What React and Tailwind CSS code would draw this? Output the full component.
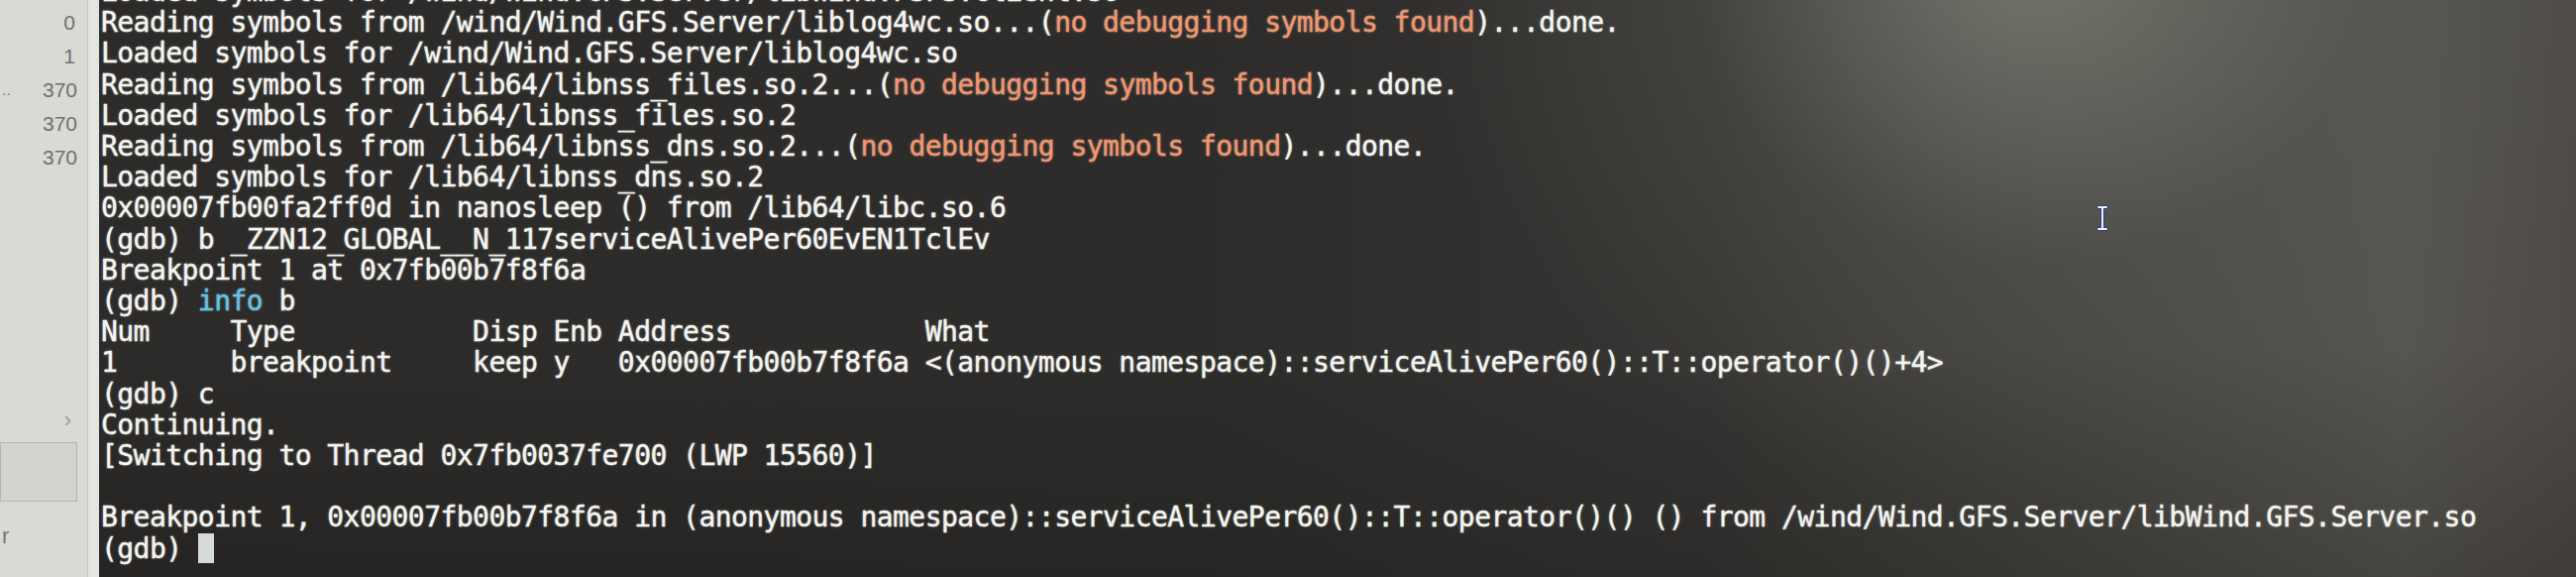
import React from "react";

const O = ({ children }) => <span className="text-[#f2966e] [-webkit-text-stroke:0.4px_#f2966e]">{children}</span>;

export default function App() {
  return (
    <div className="w-[2600px] h-[582px] overflow-hidden flex bg-[#2a2927]">
      {/* left sidebar (another window) */}
      <div className="w-[88px] h-full shrink-0 bg-[#d9dad4] flex flex-col font-['Liberation_Sans',sans-serif] text-[#6f706c]">
        <div className="pt-[6px] flex flex-col text-[21px] leading-[34px]">
          <div className="pr-[12px] text-right">0</div>
          <div className="pr-[12px] text-right">1</div>
          <div className="pr-[10px] flex justify-between pl-[2px]"><span className="text-[16px] text-[#8a8b86]">..</span><span>370</span></div>
          <div className="pr-[10px] text-right">370</div>
          <div className="pr-[10px] text-right">370</div>
        </div>
        <div className="mt-[234px] h-[26px] flex items-center justify-end pr-[16px] text-[22px] text-[#9a9b96]">›</div>
        <div className="mt-[10px] mr-[10px] h-[60px] border border-[#b4b5b0] bg-[#d3d4ce]"></div>
        <div className="mt-[22px] pl-[2px] text-[22px] leading-[26px] text-[#777873]">r</div>
      </div>
      <div className="w-[12px] h-full shrink-0 bg-[#e4e5e0] border-l border-[#c2c3be]"></div>

      {/* terminal */}
      <div className="relative flex-1 h-full overflow-hidden bg-[#2a2927] bg-[radial-gradient(ellipse_620px_560px_at_1950px_-40px,rgba(128,128,120,0.8),rgba(90,90,84,0.35)_55%,transparent_100%),linear-gradient(to_right,#2c2b29_0%,#2d2c2a_45%,#353432_65%,#4a4843_82%,#57554f_93%,#4e4b46_100%)]">
        <div className="absolute inset-0 bg-[linear-gradient(to_bottom,transparent_60%,rgba(20,18,16,0.25)_100%)]"></div>
        <div className="relative mt-[-24px] pl-[2px] font-['DejaVu_Sans_Mono',monospace] text-[28px] tracking-[-0.55px] leading-[31.2px] text-[#f4f4f0] whitespace-pre [-webkit-text-stroke:0.4px_#f4f4f0] [text-shadow:0_0_3px_rgba(255,255,255,0.35)]">
          <div>Loaded symbols for /wind/Wind.GFS.Server/libWind.FSFS.client.so</div>
          <div>Reading symbols from /wind/Wind.GFS.Server/liblog4wc.so...(<O>no debugging symbols found</O>)...done.</div>
          <div>Loaded symbols for /wind/Wind.GFS.Server/liblog4wc.so</div>
          <div>Reading symbols from /lib64/libnss_files.so.2...(<O>no debugging symbols found</O>)...done.</div>
          <div>Loaded symbols for /lib64/libnss_files.so.2</div>
          <div>Reading symbols from /lib64/libnss_dns.so.2...(<O>no debugging symbols found</O>)...done.</div>
          <div>Loaded symbols for /lib64/libnss_dns.so.2</div>
          <div>0x00007fb00fa2ff0d in nanosleep () from /lib64/libc.so.6</div>
          <div>(gdb) b _ZZN12_GLOBAL__N_117serviceAlivePer60EvEN1TclEv</div>
          <div>Breakpoint 1 at 0x7fb00b7f8f6a</div>
          <div>(gdb) <span className="text-[#62c4e2] [-webkit-text-stroke:0.4px_#62c4e2]">info</span> b</div>
          <div>{"Num     Type           Disp Enb Address            What"}</div>
          <div>{"1       breakpoint     keep y   0x00007fb00b7f8f6a <(anonymous namespace)::serviceAlivePer60()::T::operator()()+4>"}</div>
          <div>(gdb) c</div>
          <div>Continuing.</div>
          <div>[Switching to Thread 0x7fb0037fe700 (LWP 15560)]</div>
          <div>{" "}</div>
          <div>Breakpoint 1, 0x00007fb00b7f8f6a in (anonymous namespace)::serviceAlivePer60()::T::operator()() () from /wind/Wind.GFS.Server/libWind.GFS.Server.so</div>
          <div className="flex items-center">{"(gdb) "}<span className="inline-block w-[16px] h-[30px] bg-[#d6dada]"></span></div>
        </div>

        {/* mouse I-beam */}
        <svg className="absolute left-[2016px] top-[207px]" width="12" height="26" viewBox="0 0 12 26">
          <path d="M2 2 H10 M6 2 V24 M2 24 H10" stroke="#2a3c8a" strokeWidth="4" fill="none" strokeLinecap="round" />
          <path d="M2 2 H10 M6 2 V24 M2 24 H10" stroke="#f2f2f2" strokeWidth="2" fill="none" strokeLinecap="round" />
        </svg>
      </div>
    </div>
  );
}
